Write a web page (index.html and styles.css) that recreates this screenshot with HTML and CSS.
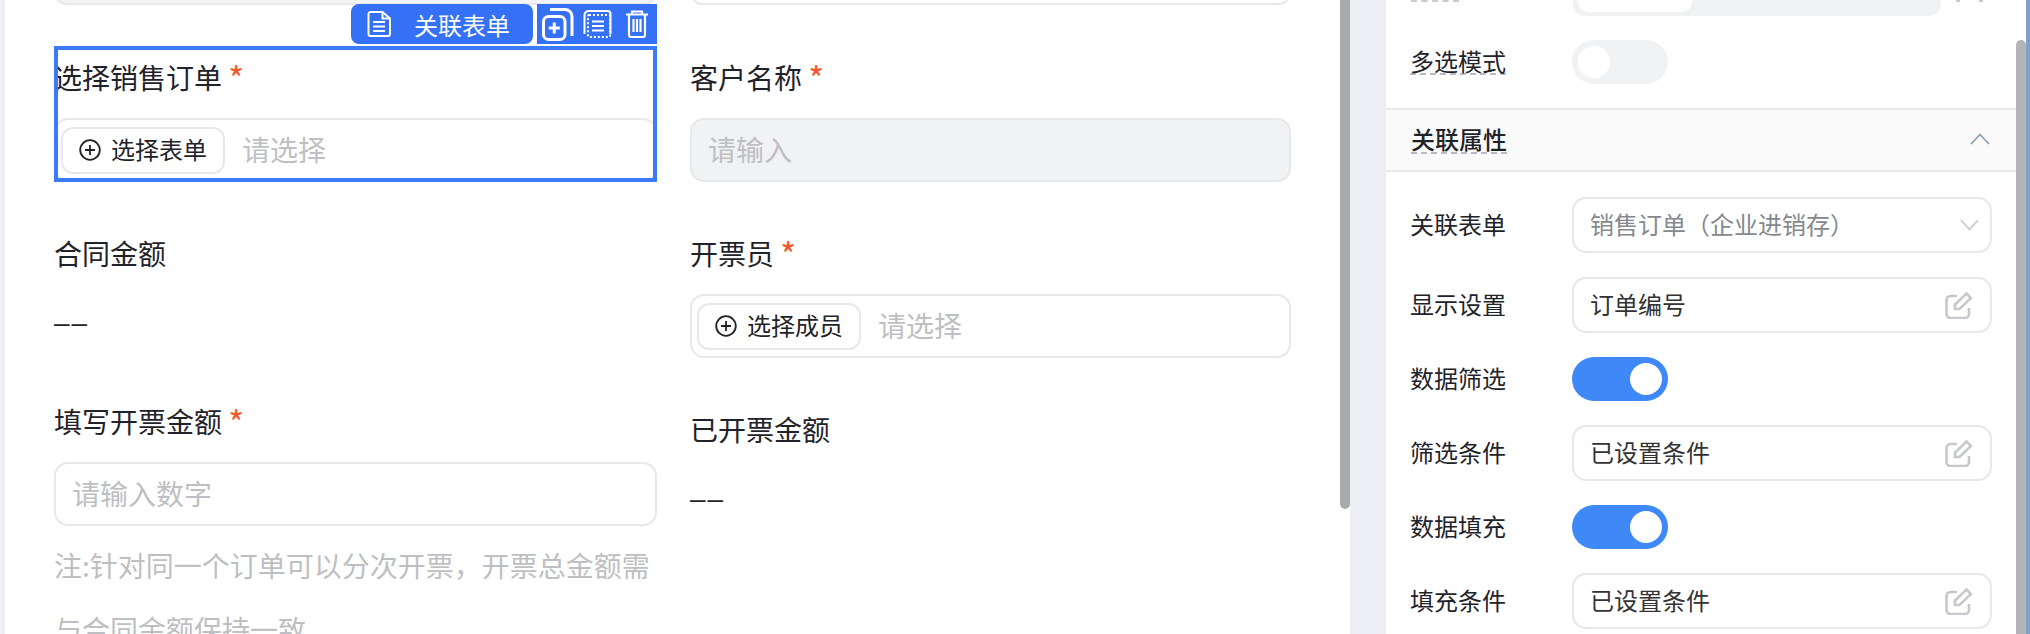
FILE: index.html
```html
<!DOCTYPE html>
<html lang="zh-CN">
<head>
    <meta charset="UTF-8">
    <title>表单设计</title>
    <link rel="stylesheet" href="styles.css">
</head>
<body>
    <div class="app">
        <div class="left-gutter"></div>

        <main class="canvas">
            <div class="form-col">
                <div class="stub is-filled"></div>

                <div class="field is-selected">
                    <div class="label">选择销售订单 <span class="req">*</span></div>
                    <div class="control">
                        <button class="pick-btn" type="button">
                            <svg class="plus-icon" viewBox="0 0 22 22"><circle cx="11" cy="11" r="9.8"/><path d="M11 6v10M6 11h10"/></svg>
                            选择表单
                        </button>
                        <span class="placeholder">请选择</span>
                    </div>
                    <div class="select-frame"></div>
                    <div class="tag">
                        <svg class="doc-icon" viewBox="0 0 24 26"><path d="M3.5 1h12L23 7.5V23a2 2 0 0 1-2 2H3.500a2 2 0 0 1-2-2V3a2 2 0 0 1 2-2z"/><path d="M15.500 1v6.500H23M6 11h12M6 15.500h12M6 20h12"/></svg>
                        <span>关联表单</span>
                    </div>
                    <div class="tools">
                        <svg class="tool-add" viewBox="0 0 32 34"><rect x="1.500" y="9.500" width="21.500" height="23" rx="5"/><path d="M8 2.500h15a7 7 0 0 1 7 7V29M12.250 15.500v11M6.750 21h11"/></svg>
                        <svg class="tool-copy" viewBox="0 0 29 28"><path d="M1.500 24V5a4 4 0 0 1 4-4h19a3 3 0 0 1 3 3v20"/><rect class="dots" x="5" y="5" width="22" height="22" rx="1"/><path d="M9 11.500h12M9 16h12M9 20.500h12"/></svg>
                        <svg class="tool-trash" viewBox="0 0 22 28"><path d="M0 4.500h22M6 4.500V1.500h10v3M3 4.500V25a2 2 0 0 0 2 2h12a2 2 0 0 0 2-2V4.500M7.500 9v13M11 9v13M14.500 9v13"/></svg>
                    </div>
                </div>

                <div class="field is-static is-tall">
                    <div class="label">合同金额</div>
                    <div class="value">––</div>
                </div>

                <div class="field">
                    <div class="label">填写开票金额 <span class="req">*</span></div>
                    <div class="control"><span class="placeholder">请输入数字</span></div>
                    <p class="note">注:针对同一个订单可以分次开票，开票总金额需与合同金额保持一致</p>
                </div>
            </div>

            <div class="form-col">
                <div class="stub"></div>

                <div class="field">
                    <div class="label">客户名称 <span class="req">*</span></div>
                    <div class="control is-disabled"><span class="placeholder">请输入</span></div>
                </div>

                <div class="field">
                    <div class="label">开票员 <span class="req">*</span></div>
                    <div class="control">
                        <button class="pick-btn" type="button">
                            <svg class="plus-icon" viewBox="0 0 22 22"><circle cx="11" cy="11" r="9.8"/><path d="M11 6v10M6 11h10"/></svg>
                            选择成员
                        </button>
                        <span class="placeholder">请选择</span>
                    </div>
                </div>

                <div class="field is-static">
                    <div class="label">已开票金额</div>
                    <div class="value">––</div>
                </div>
            </div>
        </main>

        <div class="main-scroll"><div class="main-thumb"></div></div>
        <div class="panel-gap"></div>

        <aside class="panel">
            <div class="panel-body">
                <div class="row row-cut">
                    <div class="cut-tip"></div>
                    <div class="segment"><div class="segment-on"></div></div>
                    <div class="cut-marks"><i></i><i></i></div>
                </div>
                <div class="row">
                    <span class="row-label has-tip">多选模式</span>
                    <div class="switch"></div>
                </div>
            </div>

            <div class="section-head">
                <span class="has-tip">关联属性</span>
                <svg class="chevron-up" viewBox="0 0 20 12"><path d="M1 11l9-9.500 9 9.500"/></svg>
            </div>

            <div class="panel-body panel-body-props">
                <div class="row">
                    <span class="row-label">关联表单</span>
                    <div class="box is-muted">
                        <span>销售订单（企业进销存）</span>
                        <svg class="chevron-down" viewBox="0 0 20 12"><path d="M1 1l9 9.500 9-9.500"/></svg>
                    </div>
                </div>
                <div class="row">
                    <span class="row-label">显示设置</span>
                    <div class="box"><span>订单编号</span>
                        <svg class="edit-icon" viewBox="0 0 27 27"><path d="M12 4H5.500a4 4 0 0 0-4 4v14a4 4 0 0 0 4 4H20a4 4 0 0 0 4-4v-6"/><path d="M10 17v-4.500L21.500 1.500 26 6 14.500 17z"/></svg>
                    </div>
                </div>
                <div class="row">
                    <span class="row-label">数据筛选</span>
                    <div class="switch is-on"></div>
                </div>
                <div class="row">
                    <span class="row-label">筛选条件</span>
                    <div class="box"><span>已设置条件</span>
                        <svg class="edit-icon" viewBox="0 0 27 27"><path d="M12 4H5.500a4 4 0 0 0-4 4v14a4 4 0 0 0 4 4H20a4 4 0 0 0 4-4v-6"/><path d="M10 17v-4.500L21.500 1.500 26 6 14.500 17z"/></svg>
                    </div>
                </div>
                <div class="row">
                    <span class="row-label">数据填充</span>
                    <div class="switch is-on"></div>
                </div>
                <div class="row">
                    <span class="row-label">填充条件</span>
                    <div class="box"><span>已设置条件</span>
                        <svg class="edit-icon" viewBox="0 0 27 27"><path d="M12 4H5.500a4 4 0 0 0-4 4v14a4 4 0 0 0 4 4H20a4 4 0 0 0 4-4v-6"/><path d="M10 17v-4.500L21.500 1.500 26 6 14.500 17z"/></svg>
                    </div>
                </div>
            </div>
        </aside>

        <div class="panel-scroll"><div class="panel-thumb"></div></div>
        <div class="right-edge"></div>
    </div>
</body>
</html>
```

FILE: styles.css
```css
:root {
    --blue: #3b7bf7;
    --tag-blue: #3471f6;
    --switch-blue: #3f88f8;
    --line: #e7e8ea;
    --text: #1f2329;
    --hint: #bdbfc2;
    --page-gap: #eceef3;
}

* {
    box-sizing: border-box;
}

html, body {
    margin: 0;
    padding: 0;
    height: 634px;
    overflow: hidden;
    background: #fff;
    font-family: "Noto Sans CJK SC", "Noto Sans", sans-serif;
    color: var(--text);
}

.app {
    display: flex;
    height: 634px;
    overflow: hidden;
}

.left-gutter {
    width: 5px;
    flex: none;
    background: var(--page-gap);
}

.canvas {
    width: 1335px;
    flex: none;
    display: grid;
    grid-template-columns: 603px 601px;
    column-gap: 33px;
    padding-left: 49px;
    overflow: hidden;
    background: #fff;
}

.form-col {
    display: flex;
    flex-direction: column;
    min-width: 0;
}

/* bottom of the input scrolled off above the first row */
.stub {
    height: 46px;
    flex: none;
    margin-bottom: 41px;
    margin-top: -41px;
    border: 2px solid var(--line);
    border-radius: 12px;
    background: #fff;
}

.stub.is-filled {
    background: #f2f3f5;
}

.field {
    position: relative;
    padding-bottom: 40px;
}

.field.is-static {
    padding-bottom: 33px;
}

.field.is-tall {
    padding-bottom: 39px;
}

.label {
    height: 62px;
    margin-bottom: 10px;
    font-size: 28px;
    line-height: 62px;
    white-space: nowrap;
}

.req {
    color: #f4572a;
    font-size: 34px;
    line-height: 1;
    vertical-align: -3px;
}

.value {
    font-family: "Liberation Sans", sans-serif;
    font-size: 28px;
    line-height: 32px;
    letter-spacing: 2px;
    height: 57px;
    padding-top: 13px;
}

.control {
    display: flex;
    align-items: center;
    height: 64px;
    padding: 0 16px;
    border: 2px solid var(--line);
    border-radius: 14px;
    background: #fff;
}

.control.is-disabled {
    background: #f1f2f4;
}

.control:has(.pick-btn) {
    padding: 0 5px;
}

.placeholder {
    font-size: 28px;
    line-height: 36px;
    padding-bottom: 2px;
    color: var(--hint);
    white-space: nowrap;
}

.pick-btn {
    display: flex;
    align-items: center;
    justify-content: center;
    gap: 10px;
    width: 164px;
    height: 47px;
    margin-right: 17px;
    padding: 0 0 3px;
    border: 2px solid var(--line);
    border-radius: 12px;
    background: #fff;
    font-family: inherit;
    font-size: 24px;
    color: var(--text);
}

.plus-icon {
    width: 22px;
    height: 22px;
    margin-top: 3px;
    fill: none;
    stroke: var(--text);
    stroke-width: 1.8;
}

.select-frame {
    position: absolute;
    left: 0;
    right: 0;
    top: 0;
    height: 136px;
    border: 4px solid var(--blue);
    pointer-events: none;
}

.tag {
    position: absolute;
    left: 297px;
    top: -42px;
    width: 182px;
    height: 40px;
    display: flex;
    align-items: center;
    padding-left: 16px;
    gap: 23px;
    border-radius: 8px;
    background: var(--tag-blue);
    color: #fff;
    font-size: 24px;
}

.doc-icon {
    width: 24px;
    height: 26px;
    fill: none;
    stroke: #fff;
    stroke-width: 2;
}

.tools {
    position: absolute;
    left: 483px;
    top: -42px;
    width: 120px;
    height: 40px;
    display: flex;
    align-items: center;
    padding-left: 5px;
    background: var(--tag-blue);
}

.tools svg {
    flex: none;
    fill: none;
    stroke: #fff;
}

.tool-add {
    width: 32px;
    height: 34px;
    margin-right: 9px;
    stroke-width: 3;
}

.tool-copy {
    width: 29px;
    height: 28px;
    margin-right: 14px;
    stroke-width: 2;
}

.tool-copy .dots {
    stroke-dasharray: 2 2;
}

.tool-trash {
    width: 22px;
    height: 28px;
    stroke-width: 2.2;
}

.note {
    margin: 7px 0 0;
    font-size: 28px;
    line-height: 64px;
    color: var(--hint);
}

.main-scroll {
    width: 10px;
    flex: none;
    background: #fff;
}

.main-thumb {
    height: 509px;
    border-radius: 0 0 5px 5px;
    background: #a9aaae;
}

.panel-gap {
    width: 36px;
    flex: none;
    background: var(--page-gap);
}

.panel {
    width: 630px;
    flex: none;
    background: #fff;
    overflow: hidden;
}

.panel-body {
    display: flex;
    flex-direction: column;
    gap: 24px;
    padding: 0 24px 24px 24px;
}

.panel-body-props {
    padding-top: 25px;
}

.row {
    display: flex;
    align-items: center;
    flex: none;
}

/* row scrolled off above the panel, only its lower edge still shows */
.row-cut {
    height: 16px;
    align-items: flex-start;
}

.cut-tip {
    width: 48px;
    margin: 0 114px 0 1px;
    border-top: 2px dashed #c9ccd4;
}

.cut-marks {
    display: flex;
    gap: 19px;
    margin-left: 15px;
}

.cut-marks i {
    display: block;
    width: 4px;
    height: 2px;
    background: #c9c6dc;
}

.row-label {
    width: 162px;
    flex: none;
    padding-bottom: 3px;
    font-size: 24px;
    line-height: 34px;
    white-space: nowrap;
}

.has-tip {
    text-decoration: underline dashed #b8bcc6 1.5px;
    text-underline-offset: 3px;
}

.segment {
    width: 368px;
    height: 40px;
    margin-top: -24px;
    padding: 4px 0 4px 5px;
    border-radius: 12px;
    background: #f1f2f4;
}

.segment-on {
    width: 114px;
    height: 32px;
    border-radius: 10px;
    background: #fff;
}

.switch {
    position: relative;
    width: 96px;
    height: 44px;
    border-radius: 22px;
    background: #f1f2f4;
}

/* knob */
.switch::after {
    content: "";
    position: absolute;
    top: 6px;
    left: 6px;
    width: 32px;
    height: 32px;
    border-radius: 50%;
    background: #fff;
}

.switch.is-on {
    background: var(--switch-blue);
}

.switch.is-on::after {
    left: 58px;
}

.section-head {
    display: flex;
    align-items: center;
    justify-content: space-between;
    height: 64px;
    padding: 0 26px 3px 25px;
    border-top: 2px solid var(--line);
    border-bottom: 2px solid var(--line);
    background: #fafafa;
    font-size: 24px;
    font-weight: 500;
}

.chevron-up {
    width: 20px;
    height: 12px;
    fill: none;
    stroke: #8da0bc;
    stroke-width: 1.8;
}

.box {
    display: flex;
    align-items: center;
    justify-content: space-between;
    width: 420px;
    height: 56px;
    padding: 0 18px 0 16px;
    border: 2px solid var(--line);
    border-radius: 14px;
    font-size: 24px;
    color: #333;
}

.box span {
    padding-bottom: 3px;
}

.box.is-muted {
    color: #85888d;
}

.chevron-down {
    width: 19px;
    height: 12px;
    margin-right: -7px;
    fill: none;
    stroke: #cfd1d4;
    stroke-width: 2;
}

.edit-icon {
    width: 27px;
    height: 27px;
    fill: none;
    stroke: #c5c8cc;
    stroke-width: 2.6;
}

.panel-scroll {
    width: 10px;
    flex: none;
    background: #fff;
}

.panel-thumb {
    height: 594px;
    margin-top: 40px;
    border-radius: 5px 5px 0 0;
    background: #b3b4b7;
}

.right-edge {
    width: 4px;
    flex: none;
    background: #7f9fd0;
}
```
